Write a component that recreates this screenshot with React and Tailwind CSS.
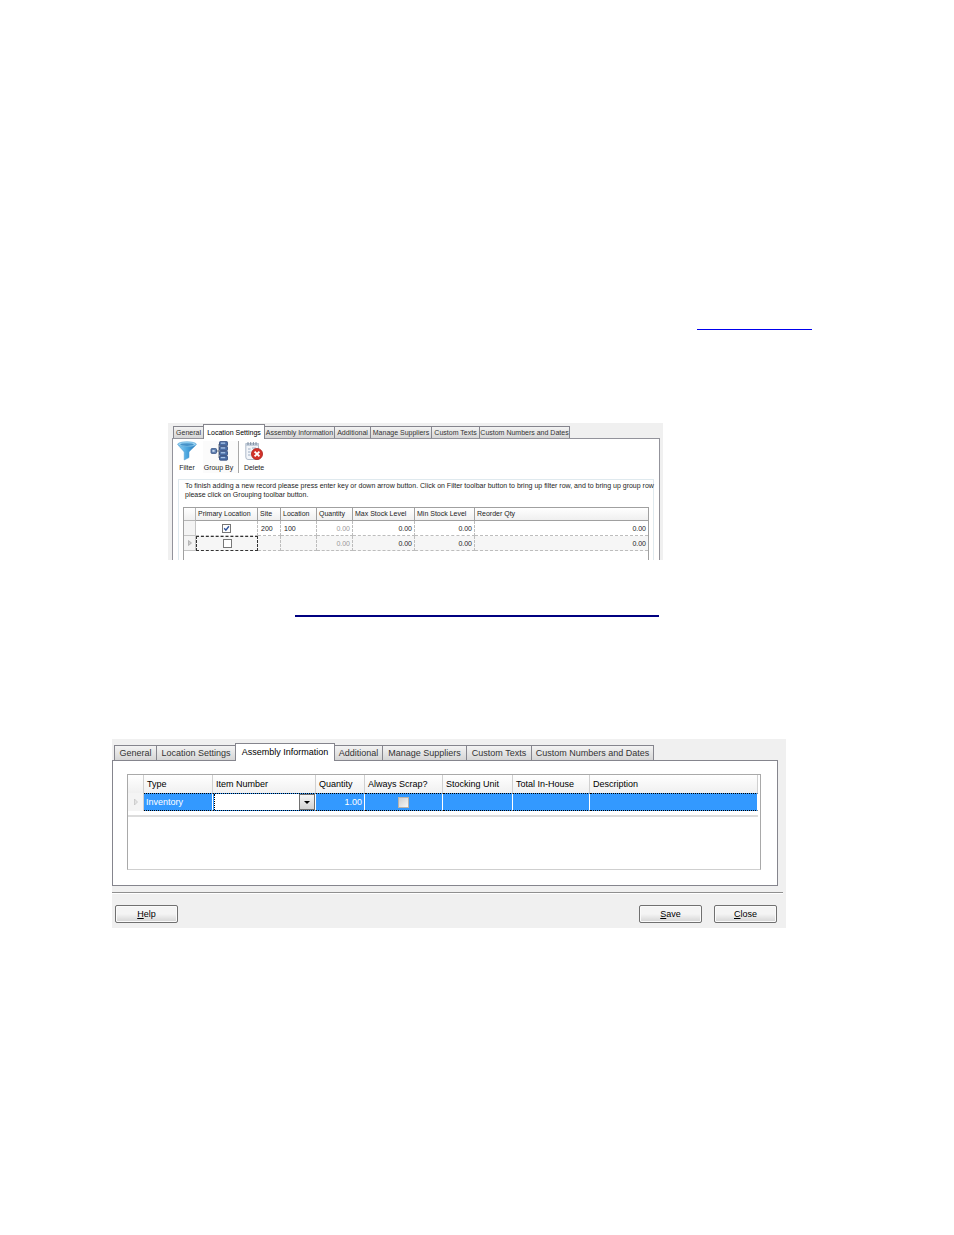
import { useState } from 'react';

// Both windows have the same set of tabs, only the scale differs
const TABS = [
  { label: 'General', small: 'w-[31px]', large: 'w-[43px]' },
  { label: 'Location Settings', small: 'w-[62px]', large: 'w-[80px]' },
  { label: 'Assembly Information', small: 'w-[71px]', large: 'w-[100px]' },
  { label: 'Additional', small: 'w-[37px]', large: 'w-[49px]' },
  { label: 'Manage Suppliers', small: 'w-[62px]', large: 'w-[85px]' },
  { label: 'Custom Texts', small: 'w-[49px]', large: 'w-[66px]' },
  { label: 'Custom Numbers and Dates', small: 'w-[91px]', large: 'w-[123px]' },
];

const LOCATION_COLUMNS = [
  { id: 'primary', label: 'Primary Location', width: 'w-[62px]' },
  { id: 'site', label: 'Site', width: 'w-[23px]' },
  { id: 'location', label: 'Location', width: 'w-[36px]' },
  { id: 'quantity', label: 'Quantity', width: 'w-[36px]' },
  { id: 'max', label: 'Max Stock Level', width: 'w-[62px]' },
  { id: 'min', label: 'Min Stock Level', width: 'w-[60px]' },
  { id: 'reorder', label: 'Reorder Qty', width: '' },
];

const LOCATION_ROWS = [
  { primary: true, site: '200', location: '100', quantity: '0.00', max: '0.00', min: '0.00', reorder: '0.00' },
  { primary: false, site: '', location: '', quantity: '0.00', max: '0.00', min: '0.00', reorder: '0.00' },
];

const ASSEMBLY_COLUMNS = [
  { id: 'type', label: 'Type', width: 'w-[69px]' },
  { id: 'item', label: 'Item Number', width: 'w-[103px]' },
  { id: 'qty', label: 'Quantity', width: 'w-[49px]' },
  { id: 'scrap', label: 'Always Scrap?', width: 'w-[78px]' },
  { id: 'unit', label: 'Stocking Unit', width: 'w-[70px]' },
  { id: 'total', label: 'Total In-House', width: 'w-[77px]' },
  { id: 'description', label: 'Description', width: '' },
];

function TabStrip({ size, active }) {
  const small = size === 'small';
  return (
    <div role="tablist" className={small ? 'flex items-end pl-px' : 'flex items-end pl-0.5'}>
      {TABS.map((tab) => {
        const selected = tab.label === active;
        const width = small ? tab.small : tab.large;
        const height = small
          ? selected ? 'h-[15px]' : 'h-3'
          : selected ? 'h-[18px]' : 'h-[15px]';
        const look = selected
          ? 'relative z-10 -mb-px bg-white text-black'
          : 'bg-gradient-to-b from-[#f3f3f3] to-[#d6d6d6] text-[#333]';
        return (
          <button
            key={tab.label}
            type="button"
            role="tab"
            aria-selected={selected}
            className={`-mr-px shrink-0 border border-b-0 border-[#85858d] text-center leading-none whitespace-nowrap ${width} ${height} ${look}`}
          >
            {tab.label}
          </button>
        );
      })}
    </div>
  );
}

function CheckBox({ id, labelledBy, initial = false, look }) {
  const [checked, setChecked] = useState(initial);
  return (
    <span className="relative inline-flex align-middle">
      <input
        id={id}
        type="checkbox"
        aria-labelledby={labelledBy}
        checked={checked}
        onChange={(e) => setChecked(e.target.checked)}
        className={`appearance-none border ${look}`}
      />
      {checked && (
        <svg viewBox="0 0 9 9" className="pointer-events-none absolute inset-0 h-full w-full" fill="none">
          <path d="M2.2 4.2 L3.9 6.2 L6.9 2.3" stroke="#31549b" strokeWidth="1.4" />
        </svg>
      )}
    </span>
  );
}

function FilterIcon() {
  return (
    <svg viewBox="0 0 20 20" className="h-5 w-5">
      <defs>
        <linearGradient id="funnel" x1="0" x2="1">
          <stop offset="0" stopColor="#8fd0f3" />
          <stop offset="0.5" stopColor="#4ba6df" />
          <stop offset="1" stopColor="#2673b4" />
        </linearGradient>
      </defs>
      <path d="M0.8 3.2 C2 6 6 9 7.2 11 V19 L12 16.6 V11 C13.5 8.6 18 6 19.2 3.2 Z" fill="url(#funnel)" stroke="#4d9bd0" strokeWidth="0.5" />
      <ellipse cx="10" cy="3.2" rx="9.2" ry="2.4" fill="#9bd5f4" stroke="#5ba8d8" strokeWidth="0.7" />
      <ellipse cx="10" cy="3.6" rx="6.8" ry="1.4" fill="#4793c9" />
    </svg>
  );
}

function GroupIcon() {
  return (
    <svg viewBox="0 0 18 20" className="h-5 w-[18px]">
      <path d="M6 10 H9 M9 3 V17 M9 3 H11 M9 8 H11 M9 12.5 H11 M9 17 H11" stroke="#5b6470" strokeWidth="0.9" fill="none" />
      <rect x="1" y="7.6" width="5.5" height="4.8" rx="0.8" fill="#6484b4" stroke="#344f80" strokeWidth="0.8" />
      <rect x="2.4" y="9" width="2.2" height="1.8" fill="#c9daf0" />
      {[0.6, 5.4, 10.2, 15].map((y) => (
        <g key={y}>
          <rect x="9.5" y={y} width="8" height="4.2" rx="0.8" fill="#4a6da5" stroke="#2d4678" strokeWidth="0.8" />
          <rect x="10.8" y={y + 0.9} width="4.4" height="1.3" fill="#a9c4e6" />
        </g>
      ))}
    </svg>
  );
}

function DeleteIcon() {
  return (
    <svg viewBox="0 0 18 20" className="h-5 w-[18px]">
      <path d="M0.8 2.5 H13.5 V18.5 H3 Q0.8 18.5 0.8 16 Z" fill="#f2f5f9" stroke="#9dabbc" strokeWidth="0.8" />
      <path d="M0.8 2.5 H13.5 V5 H0.8 Z" fill="#c3cedb" />
      <path d="M3 1 V4 M5.7 1 V4 M8.4 1 V4 M11 1 V4" stroke="#77879b" strokeWidth="0.9" />
      <path d="M3 8 H5.5 M3 11 H5.5 M3 14 H5.5 M7 7 H11" stroke="#93a5bb" strokeWidth="0.9" />
      <circle cx="12" cy="13" r="5.6" fill="#d2322a" stroke="#a51d18" strokeWidth="0.7" />
      <path d="M9.6 10.6 L14.4 15.4 M14.4 10.6 L9.6 15.4" stroke="#fff" strokeWidth="1.9" />
    </svg>
  );
}

function ToolButton({ icon, label, className = '' }) {
  return (
    <button type="button" className={`flex h-8 flex-col items-center justify-between pb-0.5 leading-none whitespace-nowrap ${className}`}>
      {icon}
      {label}
    </button>
  );
}

function LocationTable() {
  return (
    <table className="w-full table-fixed border-separate border-spacing-0">
      <thead>
        <tr className="h-[13px] bg-gradient-to-b from-white to-[#eeeeee]">
          <th className="w-3 border-r border-b border-[#b5b5b5] p-0" />
          {LOCATION_COLUMNS.map((col) => (
            <th
              key={col.id}
              id={`loc-${col.id}`}
              className={`border-b border-[#a0a0a0] p-0 pl-0.5 text-left leading-[12px] font-normal whitespace-nowrap not-last:border-r ${col.width}`}
            >
              {col.label}
            </th>
          ))}
        </tr>
      </thead>
      <tbody>
        {LOCATION_ROWS.map((row, i) => {
          const current = !row.primary;
          const cell = 'h-[15px] border-b border-dashed border-[#bdbdbd] p-0 leading-none not-last:border-r';
          return (
            <tr key={i} className={current ? 'bg-[#f6f6f6]' : 'bg-white'}>
              <td className="border-r border-b border-[#c4c4c4] bg-[#f4f4f4] p-0">
                {current && (
                  <svg viewBox="0 0 4 6" className="mx-auto h-1.5 w-1">
                    <path d="M0.5 0.5 L3.5 3 L0.5 5.5 Z" fill="#ccc" stroke="#999" strokeWidth="0.6" />
                  </svg>
                )}
              </td>
              <td
                className={
                  current
                    ? 'h-[15px] border border-dashed border-[#333] p-0 text-center leading-none'
                    : `text-center ${cell}`
                }
              >
                <CheckBox
                  id={`primary-${i}`}
                  labelledBy="loc-primary"
                  initial={row.primary}
                  look="h-[9px] w-[9px] border-[#777] bg-white"
                />
              </td>
              <td className={`pl-[3px] ${cell}`}>{row.site}</td>
              <td className={`pl-[3px] ${cell}`}>{row.location}</td>
              <td className={`pr-0.5 text-right text-[#999] ${cell}`}>{row.quantity}</td>
              <td className={`pr-0.5 text-right ${cell}`}>{row.max}</td>
              <td className={`pr-0.5 text-right ${cell}`}>{row.min}</td>
              <td className={`pr-0.5 text-right ${cell}`}>{row.reorder}</td>
            </tr>
          );
        })}
      </tbody>
    </table>
  );
}

function LocationWindow() {
  return (
    <section className="ml-14 max-w-[495px] bg-[#f0f0f0] pt-px pr-[3px] pl-1 text-[7px] text-[#1c1c1c]">
      <TabStrip size="small" active="Location Settings" />
      <div className="border border-b-0 border-[#93939b] bg-white px-[5px] pt-0.5">
        <div className="flex">
          <ToolButton icon={<FilterIcon />} label="Filter" className="w-[18px]" />
          <ToolButton icon={<GroupIcon />} label="Group By" className="ml-[7px] w-9 border-r border-[#a8a8a8] bg-[#fbfbfb] pr-1" />
          <ToolButton icon={<DeleteIcon />} label="Delete" className="ml-[3px] w-6" />
        </div>
        <div className="mt-1.5 border border-b-0 border-[#dfe9ee] px-1 pt-px">
          <p className="pl-0.5 leading-[9px] whitespace-nowrap">
            To finish adding a new record please press enter key or down arrow button. Click on Filter toolbar button to bring up filter row, and to bring up group row
            <br />
            please click on Grouping toolbar button.
          </p>
          <div className="mt-2 border border-b-0 border-[#a0a0a0] pb-[9px]">
            <LocationTable />
          </div>
        </div>
      </div>
    </section>
  );
}

function AssemblyTable() {
  const cell = 'h-[18px] border-y border-r border-y-black border-r-white p-0 leading-none [border-top-style:dotted] [border-bottom-style:dotted]';
  return (
    <table className="w-full table-fixed border-separate border-spacing-0">
      <thead>
        <tr className="h-[18px] bg-gradient-to-b from-white to-[#f0f0f0] text-black">
          <th className="w-4 border-r border-[#d0d0d0] p-0" />
          {ASSEMBLY_COLUMNS.map((col) => (
            <th
              key={col.id}
              id={`asm-${col.id}`}
              className={`border-r border-[#d0d0d0] p-0 pl-[3px] text-left leading-none font-normal whitespace-nowrap ${col.width}`}
            >
              {col.label}
            </th>
          ))}
        </tr>
      </thead>
      <tbody>
        <tr className="bg-[#3399ff] text-white">
          <td className="border-r border-[#d0d0d0] bg-[#f4f4f4] p-0">
            <svg viewBox="0 0 4 8" className="mx-auto h-2 w-1">
              <path d="M0.5 1 L3.5 4 L0.5 7 Z" fill="#e4e4e4" stroke="#bbb" strokeWidth="0.6" />
            </svg>
          </td>
          <td className={`pl-0.5 ${cell}`}>Inventory</td>
          <td className={cell}>
            <div className="relative ml-px h-4 bg-white">
              <select
                aria-labelledby="asm-item"
                className="block h-4 w-full appearance-none border-l border-dotted border-black bg-white px-0.5 text-black"
              >
                <option value=""></option>
              </select>
              <span className="pointer-events-none absolute inset-y-0 right-0 flex w-4 items-center justify-center border border-[#707070] bg-gradient-to-b from-[#f5f5f5] to-[#d2d2d2]">
                <svg viewBox="0 0 6 3" className="h-[3px] w-1.5">
                  <path d="M0 0 H6 L3 3 Z" fill="#000" />
                </svg>
              </span>
            </div>
          </td>
          <td className={`pr-0.5 text-right ${cell}`}>1.00</td>
          <td className={`text-center ${cell}`}>
            <CheckBox
              id="always-scrap"
              labelledBy="asm-scrap"
              look="h-[11px] w-[11px] border-[#b9b2aa] bg-gradient-to-br from-[#cfcfcf] to-[#f6f6f6]"
            />
          </td>
          <td className={cell} />
          <td className={cell} />
          <td className={cell} />
        </tr>
      </tbody>
    </table>
  );
}

function PushButton({ children }) {
  return (
    <button
      type="button"
      className="h-[18px] w-[63px] rounded-xs border border-[#707070] bg-gradient-to-b from-[#f4f4f4] from-50% to-[#d4d4d4] text-center leading-none text-black inset-ring inset-ring-[#fafafa]"
    >
      {children}
    </button>
  );
}

function AssemblyWindow() {
  return (
    <section className="max-w-[674px] bg-[#f0f0f0] pt-1 pb-[5px] text-[9px] text-[#1c1c1c]">
      <TabStrip size="large" active="Assembly Information" />
      <div className="mr-2 border border-[#85858d] bg-white pt-[13px] pr-4 pb-[15px] pl-3.5">
        <div className="h-24 border border-[#a9a9a9] border-b-[#cfcfcf]">
          <div className="mr-0.5 border-b-2 border-[#dcdcdc] pb-1">
            <AssemblyTable />
          </div>
        </div>
      </div>
      <div className="mt-1.5 mr-[3px] border-t border-[#8f8f8f] border-b border-b-white" />
      <div className="mt-[11px] flex justify-between pr-[9px] pl-[3px]">
        <PushButton><u>H</u>elp</PushButton>
        <div className="flex gap-3">
          <PushButton><u>S</u>ave</PushButton>
          <PushButton><u>C</u>lose</PushButton>
        </div>
      </div>
    </section>
  );
}

export default function App() {
  return (
    <main className="min-h-screen bg-white px-28 pt-[329px] font-['Liberation_Sans',Arial,sans-serif]">
      <hr className="mr-[30px] ml-auto w-[115px] border-t border-[#0000ee]" />
      <div className="mt-[93px]">
        <LocationWindow />
      </div>
      <hr className="mt-[55px] ml-[183px] w-[364px] border-t-2 border-[#000080]" />
      <div className="mt-[122px]">
        <AssemblyWindow />
      </div>
    </main>
  );
}
